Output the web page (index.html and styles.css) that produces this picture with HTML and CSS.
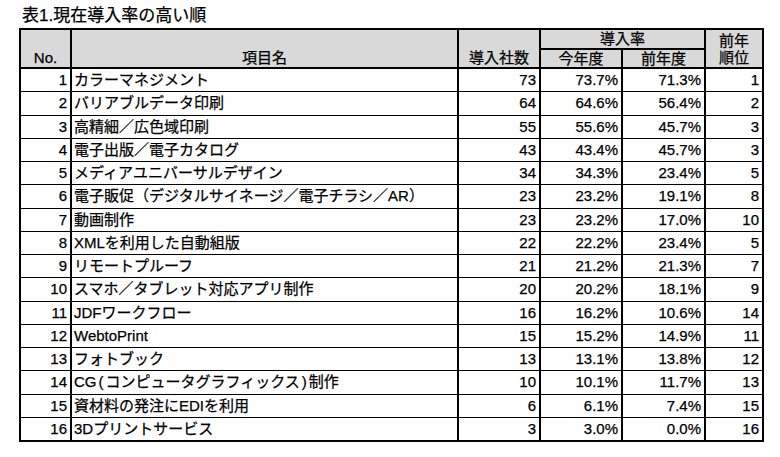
FILE: index.html
```html
<!DOCTYPE html>
<html lang="ja">
<head>
<meta charset="utf-8">
<title>表1.現在導入率の高い順</title>
<link rel="stylesheet" href="styles.css">
</head>
<body>
<div class="title">表1.現在導入率の高い順</div>
<div class="table">
  <div class="thead">
    <div class="th th-no">No.</div>
    <div class="th th-name">項目名</div>
    <div class="th th-count">導入社数</div>
    <div class="th th-rate">導入率</div>
    <div class="th th-sub">今年度</div>
    <div class="th th-sub">前年度</div>
    <div class="th th-rank">前年<br>順位</div>
  </div>
  <div class="tbody">
    <div class="td num">1</div><div class="td name">カラーマネジメント</div><div class="td num">73</div><div class="td num">73.7%</div><div class="td num">71.3%</div><div class="td num rk">1</div>
    <div class="td num">2</div><div class="td name">バリアブルデータ印刷</div><div class="td num">64</div><div class="td num">64.6%</div><div class="td num">56.4%</div><div class="td num rk">2</div>
    <div class="td num">3</div><div class="td name">高精細／広色域印刷</div><div class="td num">55</div><div class="td num">55.6%</div><div class="td num">45.7%</div><div class="td num rk">3</div>
    <div class="td num">4</div><div class="td name">電子出版／電子カタログ</div><div class="td num">43</div><div class="td num">43.4%</div><div class="td num">45.7%</div><div class="td num rk">3</div>
    <div class="td num">5</div><div class="td name">メディアユニバーサルデザイン</div><div class="td num">34</div><div class="td num">34.3%</div><div class="td num">23.4%</div><div class="td num rk">5</div>
    <div class="td num">6</div><div class="td name">電子販促（デジタルサイネージ／電子チラシ／AR）</div><div class="td num">23</div><div class="td num">23.2%</div><div class="td num">19.1%</div><div class="td num rk">8</div>
    <div class="td num">7</div><div class="td name">動画制作</div><div class="td num">23</div><div class="td num">23.2%</div><div class="td num">17.0%</div><div class="td num rk">10</div>
    <div class="td num">8</div><div class="td name">XMLを利用した自動組版</div><div class="td num">22</div><div class="td num">22.2%</div><div class="td num">23.4%</div><div class="td num rk">5</div>
    <div class="td num">9</div><div class="td name">リモートプルーフ</div><div class="td num">21</div><div class="td num">21.2%</div><div class="td num">21.3%</div><div class="td num rk">7</div>
    <div class="td num">10</div><div class="td name">スマホ／タブレット対応アプリ制作</div><div class="td num">20</div><div class="td num">20.2%</div><div class="td num">18.1%</div><div class="td num rk">9</div>
    <div class="td num">11</div><div class="td name">JDFワークフロー</div><div class="td num">16</div><div class="td num">16.2%</div><div class="td num">10.6%</div><div class="td num rk">14</div>
    <div class="td num">12</div><div class="td name">WebtoPrint</div><div class="td num">15</div><div class="td num">15.2%</div><div class="td num">14.9%</div><div class="td num rk">11</div>
    <div class="td num">13</div><div class="td name">フォトブック</div><div class="td num">13</div><div class="td num">13.1%</div><div class="td num">13.8%</div><div class="td num rk">12</div>
    <div class="td num">14</div><div class="td name">CG<span class="paren">(</span>コンピュータグラフィックス<span class="paren">)</span>制作</div><div class="td num">10</div><div class="td num">10.1%</div><div class="td num">11.7%</div><div class="td num rk">13</div>
    <div class="td num">15</div><div class="td name">資材料の発注にEDIを利用</div><div class="td num">6</div><div class="td num">6.1%</div><div class="td num">7.4%</div><div class="td num rk">15</div>
    <div class="td num">16</div><div class="td name">3Dプリントサービス</div><div class="td num">3</div><div class="td num">3.0%</div><div class="td num">0.0%</div><div class="td num rk">16</div>
  </div>
</div>
</body>
</html>
```

FILE: styles.css
```css
html, body {
  margin: 0;
  padding: 0;
  background: #fff;
}
body {
  font-family: "Liberation Sans", "Noto Sans CJK JP", sans-serif;
  color: #000;
  -webkit-text-stroke: 0.25px #000;
}
.title {
  height: 28px;
  box-sizing: border-box;
  padding: 5px 0 0 22px;
  font-size: 17px;
  line-height: 22px;
}
.table {
  margin-left: 19px;
  width: 741px;
  padding: 2px;
  background: #000;
}
.thead,
.tbody {
  display: grid;
  grid-template-columns: 49px 385px 80px 80px 81px 56px;
  column-gap: 2px;
}
.thead {
  grid-template-rows: 18px 17px;
  row-gap: 2px;
  margin-bottom: 2px;
}
.tbody {
  grid-auto-rows: 22.25px;
  row-gap: 1px;
}
.th {
  background: #d9d9d9;
  font-size: 15px;
  line-height: 17px;
  display: flex;
  justify-content: center;
  text-align: center;
}
.th-no, .th-name, .th-count {
  grid-row: 1 / 3;
  align-items: flex-end;
  padding-bottom: 1px;
}
.th-no { grid-column: 1; }
.th-name { grid-column: 2; }
.th-count { grid-column: 3; }
.th-rate {
  grid-column: 4 / 6;
  grid-row: 1;
  align-items: flex-start;
}
.th-sub {
  grid-row: 2;
  align-items: flex-end;
}
.th-rank {
  grid-column: 6;
  grid-row: 1 / 3;
  align-items: center;
}
.td {
  background: #fff;
  font-size: 15px;
  line-height: 22px;
  white-space: nowrap;
}
.num {
  text-align: right;
  padding-right: 3px;
}
.name {
  padding-left: 2px;
}
.paren {
  padding: 0 2px;
}
```
